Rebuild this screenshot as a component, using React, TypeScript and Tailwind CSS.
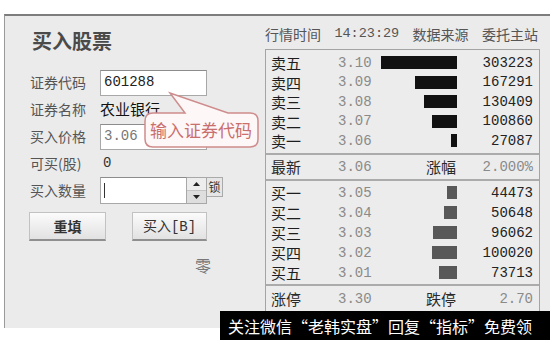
import React from "react";

const CJK = { fontFamily: '"Noto Sans CJK SC", "Liberation Sans", sans-serif' };
const MONO = { fontFamily: '"Liberation Mono", "Noto Sans CJK SC", monospace' };

type Row = { label: string; price: string; bar: number; vol: string };

const sells: Row[] = [
  { label: "卖五", price: "3.10", bar: 76, vol: "303223" },
  { label: "卖四", price: "3.09", bar: 42, vol: "167291" },
  { label: "卖三", price: "3.08", bar: 33, vol: "130409" },
  { label: "卖二", price: "3.07", bar: 25, vol: "100860" },
  { label: "卖一", price: "3.06", bar: 6, vol: "27087" },
];
const buys: Row[] = [
  { label: "买一", price: "3.05", bar: 10, vol: "44473" },
  { label: "买二", price: "3.04", bar: 13, vol: "50648" },
  { label: "买三", price: "3.03", bar: 24, vol: "96062" },
  { label: "买四", price: "3.02", bar: 25, vol: "100020" },
  { label: "买五", price: "3.01", bar: 18, vol: "73713" },
];

function BookRow({ r, color, h }: { r: Row; color: string; h: string }) {
  return (
    <div className={`flex items-center ${h}`}>
      <div className="w-[67px] text-[15px] leading-none text-[#1e1e1e]" style={CJK}>
        {r.label}
      </div>
      <div className="w-[40px] text-[14px] leading-none text-[#8a8a8a]" style={MONO}>
        {r.price}
      </div>
      <div className="w-[79px] flex justify-end">
        <div className={`h-[13px] ${color}`} style={{ width: r.bar }} />
      </div>
      <div className="flex-1 text-right pr-[6px] text-[14px] leading-none text-[#222]" style={MONO}>
        {r.vol}
      </div>
    </div>
  );
}

function InfoRow({ a, b, c, d }: { a: string; b: string; c: string; d: string }) {
  return (
    <div className="flex items-center h-full">
      <div className="w-[67px] text-[15px] leading-none text-[#2a2a2a]" style={CJK}>
        {a}
      </div>
      <div className="w-[40px] text-[14px] leading-none text-[#8a8a8a]" style={MONO}>
        {b}
      </div>
      <div className="w-[79px] flex justify-end text-[15px] leading-none text-[#2a2a2a]" style={CJK}>
        <span className="mr-[1px]">{c}</span>
      </div>
      <div className="flex-1 text-right pr-[6px] text-[14px] leading-none text-[#8a8a8a]" style={MONO}>
        {d}
      </div>
    </div>
  );
}

function Label({ children }: { children: React.ReactNode }) {
  return (
    <div className="w-[70px] text-[14px] text-[#555]" style={CJK}>
      {children}
    </div>
  );
}

export default function App() {
  return (
    <div className="relative w-[550px] h-[340px] bg-white overflow-hidden" style={CJK}>
      <div className="absolute left-[4px] top-[14px] w-[546px] h-[314px] bg-[#ebebeb] border-t-2 border-l border-t-[#7d7d7d] border-l-[#9a9a9a] flex">
        {/* left column */}
        <div className="w-[260px] pl-[25px] flex flex-col">
          <div className="mt-[13px] pl-[2px] text-[20px] leading-[24px] font-bold text-[#4a4a4a]">买入股票</div>
          <div className="mt-[16px] flex flex-col">
            <div className="flex items-center h-[27px]">
              <Label>证券代码</Label>
              <div className="w-[107px] h-[26px] bg-white border border-[#a8a8a8] border-t-[#8c8c8c] flex items-center pl-[3px] text-[14px] text-[#222]" style={MONO}>
                601288
              </div>
            </div>
            <div className="flex items-center h-[27px]">
              <Label>证券名称</Label>
              <div className="text-[15px] text-[#111]">农业银行</div>
            </div>
            <div className="flex items-center h-[27px]">
              <Label>买入价格</Label>
              <div className="w-[107px] h-[26px] bg-white border border-[#a8a8a8] border-t-[#8c8c8c] flex items-center pl-[3px] text-[14px] text-[#777]" style={MONO}>
                3.06
              </div>
            </div>
            <div className="flex items-center h-[27px]">
              <Label>可买(股)</Label>
              <div className="pl-[3px] text-[14px] text-[#333]" style={MONO}>
                0
              </div>
            </div>
            <div className="flex items-center h-[27px]">
              <Label>买入数量</Label>
              <div className="flex items-start h-[27px]">
                <div className="w-[87px] h-[27px] bg-white border border-[#a8a8a8] border-t-[#8c8c8c] flex items-center pl-[3px]">
                  <div className="w-px h-[15px] bg-[#333]" />
                </div>
                <div className="w-[20px] h-[27px] flex flex-col border border-[#a8a8a8] border-l-0">
                  <div className="flex-1 bg-[#ededed] border-b border-[#c4c4c4] flex items-center justify-center">
                    <svg width="7" height="4" viewBox="0 0 7 4">
                      <polygon points="3.5,0 7,4 0,4" fill="#222" />
                    </svg>
                  </div>
                  <div className="flex-1 bg-[#dedede] flex items-center justify-center">
                    <svg width="7" height="4" viewBox="0 0 7 4">
                      <polygon points="0,0 7,0 3.5,4" fill="#222" />
                    </svg>
                  </div>
                </div>
                <div className="w-[16px] h-[20px] bg-[#e6e6e6] border border-[#aaa] border-l-0 flex items-center justify-center text-[12px] leading-none text-[#333]">
                  锁
                </div>
              </div>
            </div>
          </div>
          <div className="mt-[8px] flex items-center -ml-[1px]">
            <button className="w-[77px] h-[29px] bg-gradient-to-b from-[#fbfbfb] to-[#e2e2e2] border border-[#c2c2c2] border-b-2 border-b-[#8f8f8f] text-[14px] font-bold text-[#333] leading-none">
              重填
            </button>
            <button className="ml-[26px] w-[75px] h-[29px] bg-gradient-to-b from-[#fbfbfb] to-[#e2e2e2] border border-[#c2c2c2] border-b-2 border-b-[#8f8f8f] text-[14px] text-[#333] leading-none">
              买入<span style={MONO}>[B]</span>
            </button>
          </div>
          <div className="mt-[14px] pl-[165px] text-[16px] leading-[20px] text-[#777]">零</div>
        </div>

        {/* right column */}
        <div className="w-[275px] flex flex-col">
          <div className="mt-[8px] h-[20px] flex items-center justify-between pr-[2px] text-[14px] text-[#555]">
            <span>行情时间</span>
            <span className="text-[13.5px]" style={MONO}>
              14:23:29
            </span>
            <span>数据来源</span>
            <span>委托主站</span>
          </div>
          <div className="mt-[5px] border border-[#a4a4a4] bg-[#ececec] flex flex-col pl-[5px]">
            <div className="pt-[3px] pb-[2px]">
              {sells.map((r) => (
                <BookRow key={r.label} r={r} color="bg-[#111]" h="h-[19.5px]" />
              ))}
            </div>
            <div className="-ml-[5px] border-t-2 border-[#ababab]" />
            <div className="h-[24px]">
              <InfoRow a="最新" b="3.06" c="涨幅" d="2.000%" />
            </div>
            <div className="-ml-[5px] border-t-2 border-[#ababab]" />
            <div className="pt-[2px] pb-[1px]">
              {buys.map((r) => (
                <BookRow key={r.label} r={r} color="bg-[#585858]" h="h-[20px]" />
              ))}
            </div>
            <div className="-ml-[5px] border-t-2 border-[#ababab]" />
            <div className="h-[30px] pb-[4px]">
              <InfoRow a="涨停" b="3.30" c="跌停" d="2.70" />
            </div>
          </div>
        </div>
      </div>

      {/* callout */}
      <svg className="absolute left-[140px] top-[88px]" width="125" height="64" viewBox="0 0 125 64">
        <path
          d="M 13 25 L 45 25 L 30 5 L 88 25 L 110 25 Q 118 25 118 33 L 118 51 Q 118 59 110 59 L 13 59 Q 5 59 5 51 L 5 33 Q 5 25 13 25 Z"
          fill="#fdf7f7"
          stroke="#cf8c8c"
          strokeWidth="1.5"
        />
      </svg>
      <div className="absolute left-[150px] top-[119px] text-[17px] leading-[22px] text-[#c96f6d]">输入证券代码</div>

      {/* watermark banner */}
      <div className="absolute left-[220px] top-[311px] w-[330px] h-[29px] bg-black flex items-center pl-[8px] text-[16px] text-white whitespace-nowrap">
        关注微信“老韩实盘”回复“指标”免费领
      </div>
    </div>
  );
}
